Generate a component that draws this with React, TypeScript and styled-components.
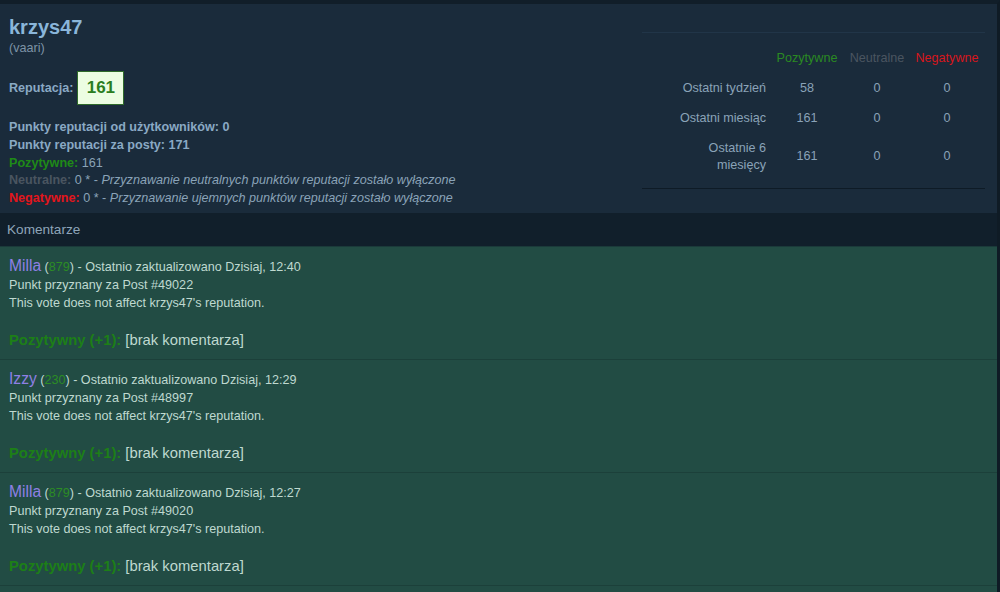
import React from "react";
import styled, { createGlobalStyle } from "styled-components";

const Global = createGlobalStyle`
  html, body { margin: 0; padding: 0; background: #1a2b3b; }
  body { font-family: "Liberation Sans", Arial, sans-serif; }
`;

const Page = styled.div`
  width: 1000px;
  height: 592px;
  box-sizing: border-box;
  overflow: hidden;
  display: flex;
  flex-direction: column;
  border-top: 4px solid #111e29;
  border-right: 3px solid #0f1b25;
  background: #1a2b3b;
  font-size: 12.6px;
`;

const Header = styled.div`
  display: flex;
  justify-content: space-between;
  padding: 12px 9px 0 9px;
  height: 209px;
  flex-shrink: 0;
  box-sizing: border-box;
`;

const Left = styled.div`
  display: flex;
  flex-direction: column;
`;

const UserName = styled.div`
  font-size: 20px;
  font-weight: bold;
  line-height: 22px;
  color: #8ab6da;
`;

const Sub = styled.div`
  color: #7d93a6;
  line-height: 18px;
  margin-top: 1px;
`;

const RepRow = styled.div`
  display: flex;
  align-items: center;
  gap: 4px;
  margin-top: 14px;
  margin-bottom: 14px;
`;

const Label = styled.span<{ $c?: string }>`
  font-weight: bold;
  color: ${(p) => p.$c || "#8aa9c4"};
`;

const RepBox = styled.div`
  width: 45px;
  height: 32px;
  background: #ecfde2;
  border: 1px solid #2f6b2a;
  display: flex;
  align-items: center;
  justify-content: center;
  font-size: 17px;
  font-weight: bold;
  color: #2a7d1e;
`;

const Line = styled.div`
  line-height: 17.8px;
  color: #8aa3b8;
`;

const Note = styled.i`
  color: #8aa3b8;
`;

const StatsWrap = styled.div`
  width: 343px;
  margin-top: 16px;
  margin-right: 3px;
  align-self: flex-start;
  border-top: 1px solid #213548;
  border-bottom: 1px solid #0e1b26;
  padding-bottom: 8px;
`;

const Table = styled.table`
  border-collapse: collapse;
  width: 340px;
  color: #8aa3b8;
  font-size: 12.6px;
`;

const Th = styled.th<{ $c: string }>`
  font-weight: normal;
  color: ${(p) => p.$c};
  padding: 17px 0 6px;
  line-height: 17px;
  width: 70px;
  text-align: center;
`;

const RowLabel = styled.td`
  text-align: right;
  padding: 6.5px 6px 6.5px 30px;
  line-height: 17px;
`;

const Cell = styled.td`
  text-align: center;
  padding: 6.5px 0;
  line-height: 17px;
`;

const CommentsBar = styled.div`
  height: 33px;
  flex-shrink: 0;
  background: #111f2b;
  display: flex;
  align-items: center;
  padding: 0 7px;
  font-size: 13.6px;
  color: #8ea5b9;
  border-bottom: 1px solid #1b3a3a;
`;

const List = styled.div`
  flex: 1;
  background: #224c44;
`;

const Comment = styled.div`
  padding: 10px 9px 9px;
  border-bottom: 1px solid #1c403a;
  color: #bfd9d0;
`;

const CLine = styled.div`
  line-height: 18px;
  min-height: 18px;
`;

const Big = styled.div`
  line-height: 20px;
  font-size: 14.8px;
`;

const Name = styled.span`
  color: #8f80e4;
  font-size: 15.6px;
`;

const Num = styled.span`
  color: #2c8d24;
`;

const Pos = styled.span`
  color: #1d7f17;
  font-weight: bold;
`;

const comments = [
  { name: "Milla", rep: "879", time: "12:40", post: "49022" },
  { name: "Izzy", rep: "230", time: "12:29", post: "48997" },
  { name: "Milla", rep: "879", time: "12:27", post: "49020" },
];

const rows = [
  { label: "Ostatni tydzień", v: ["58", "0", "0"] },
  { label: "Ostatni miesiąc", v: ["161", "0", "0"] },
  { label: "Ostatnie 6 miesięcy", v: ["161", "0", "0"] },
];

export default function App() {
  return (
    <>
      <Global />
      <Page>
        <Header>
          <Left>
            <UserName>krzys47</UserName>
            <Sub>(vaari)</Sub>
            <RepRow>
              <Label>Reputacja:</Label>
              <RepBox>161</RepBox>
            </RepRow>
            <Line>
              <Label>Punkty reputacji od użytkowników: 0</Label>
            </Line>
            <Line>
              <Label>Punkty reputacji za posty: 171</Label>
            </Line>
            <Line>
              <Label $c="#1f8a17">Pozytywne:</Label> 161
            </Line>
            <Line>
              <Label $c="#4a5560">Neutralne:</Label> 0 * -{" "}
              <Note>Przyznawanie neutralnych punktów reputacji zostało wyłączone</Note>
            </Line>
            <Line>
              <Label $c="#e3151b">Negatywne:</Label> 0 * -{" "}
              <Note>Przyznawanie ujemnych punktów reputacji zostało wyłączone</Note>
            </Line>
          </Left>
          <StatsWrap>
            <Table>
              <thead>
                <tr>
                  <th />
                  <Th $c="#2a8a22">Pozytywne</Th>
                  <Th $c="#4a5560">Neutralne</Th>
                  <Th $c="#d8161c">Negatywne</Th>
                </tr>
              </thead>
              <tbody>
                {rows.map((r) => (
                  <tr key={r.label}>
                    <RowLabel>{r.label}</RowLabel>
                    {r.v.map((v, i) => (
                      <Cell key={i}>{v}</Cell>
                    ))}
                  </tr>
                ))}
              </tbody>
            </Table>
          </StatsWrap>
        </Header>
        <CommentsBar>Komentarze</CommentsBar>
        <List>
          {comments.map((c, i) => (
            <Comment key={i}>
              <CLine>
                <Name>{c.name}</Name> (<Num>{c.rep}</Num>) - Ostatnio zaktualizowano Dzisiaj, {c.time}
              </CLine>
              <CLine>Punkt przyznany za Post #{c.post}</CLine>
              <CLine>This vote does not affect krzys47's reputation.</CLine>
              <CLine />
              <Big>
                <Pos>Pozytywny (+1):</Pos> [brak komentarza]
              </Big>
            </Comment>
          ))}
        </List>
      </Page>
    </>
  );
}
